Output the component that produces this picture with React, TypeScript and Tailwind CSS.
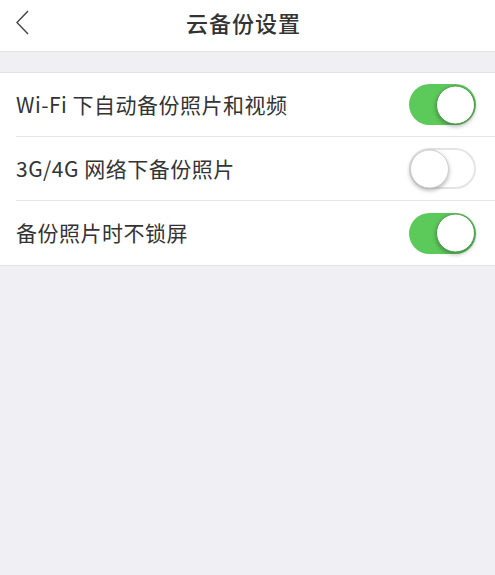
import { useState } from 'react';

const font = { fontFamily: '"PingFang SC", "Noto Sans CJK SC", "Noto Sans", sans-serif' };

function Toggle({ on, onClick }: { on: boolean; onClick: () => void }) {
  return (
    <button
      onClick={onClick}
      className={`relative h-[41px] w-[67px] shrink-0 rounded-full transition-colors ${
        on ? 'bg-[#5cc95b]' : 'bg-white border-[2px] border-[#e4e4e4]'
      }`}
    >
      <span
        className={`absolute top-1/2 h-[39px] w-[39px] -translate-y-1/2 rounded-full bg-white shadow-[0_2px_4px_rgba(0,0,0,0.3)] ${
          on ? 'right-[1px] border border-[#4a9a4a]' : 'left-[-1px] border border-[#d0d0d0]'
        }`}
      />
    </button>
  );
}

export default function App() {
  const [settings, setSettings] = useState([
    { label: 'Wi-Fi 下自动备份照片和视频', on: true },
    { label: '3G/4G 网络下备份照片', on: false },
    { label: '备份照片时不锁屏', on: true },
  ]);

  const toggle = (i: number) =>
    setSettings((s) => s.map((x, j) => (j === i ? { ...x, on: !x.on } : x)));

  return (
    <div className="min-h-[575px] bg-[#f0eff3] text-[#333]" style={font}>
      <header className="relative flex h-[52px] justify-center border-b border-[#e2e2e2] bg-white pt-[6px]">
        <button className="absolute left-[14px] top-[9px] p-0">
          <svg width="18" height="28" viewBox="0 0 18 28" fill="none">
            <path d="M14 2 L3 13.5 L14 25" stroke="#444" strokeWidth="1.4" />
          </svg>
        </button>
        <h1 className="mr-[8px] text-[22px] leading-[32px] font-medium tracking-[1px] text-[#333]">云备份设置</h1>
      </header>

      <div className="mt-[20px] border-y border-[#e2e2e2] bg-white">
        {settings.map((s, i) => (
          <div key={i} className="pl-[16px]">
            <div
              className={`flex h-[64px] items-center justify-between pr-[19px] ${
                i < settings.length - 1 ? 'border-b border-[#e6e6e6]' : ''
              }`}
            >
              <span className="text-[21px] tracking-[0.5px] text-[#333]">{s.label}</span>
              <Toggle on={s.on} onClick={() => toggle(i)} />
            </div>
          </div>
        ))}
      </div>
    </div>
  );
}
